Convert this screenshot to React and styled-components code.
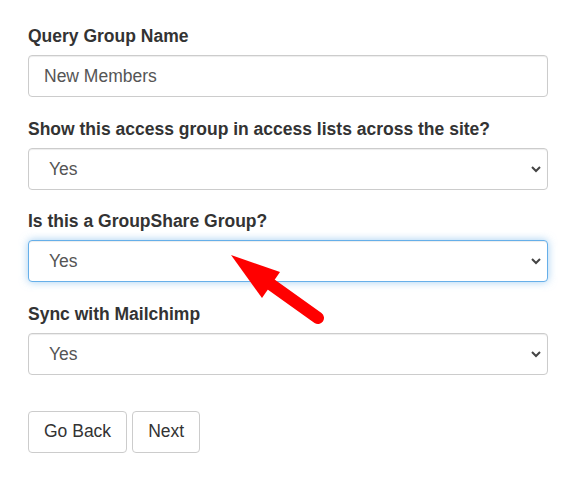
import React from 'react';
import styled, { createGlobalStyle } from 'styled-components';

const GlobalStyle = createGlobalStyle`
  * { box-sizing: border-box; }
  body {
    margin: 0;
    background: #fff;
    font-family: "Liberation Sans", Arial, sans-serif;
    color: #333;
  }
`;

const Page = styled.div`
  position: relative;
  width: 583px;
  height: 496px;
  padding: 25px 35px 0 28px;
`;

const FormGroup = styled.div`
  margin-bottom: 20.5px;
`;

const Label = styled.label`
  display: block;
  font-size: 17.5px;
  font-weight: bold;
  line-height: 22px;
  margin-bottom: 8px;
`;

const TextInput = styled.input`
  display: block;
  width: 520px;
  height: 42px;
  padding: 6px 15px;
  font-family: inherit;
  font-size: 17.5px;
  color: #555;
  background: #fff;
  border: 1px solid #ccc;
  border-radius: 4px;
  box-shadow: inset 0 1px 1px rgba(0, 0, 0, 0.075);
  outline: none;
`;

const SelectWrap = styled.div`
  position: relative;
  width: 520px;
`;

const Select = styled.select`
  display: block;
  width: 100%;
  height: 42px;
  padding: 6px 20px;
  font-family: inherit;
  font-size: 17.5px;
  color: #555;
  background: #fff;
  appearance: none;
  border: 1px solid ${(p) => (p.$focused ? '#66afe9' : '#ccc')};
  border-radius: 4px;
  box-shadow: ${(p) =>
    p.$focused
      ? 'inset 0 1px 1px rgba(0,0,0,.075), 0 0 8px rgba(102,175,233,.6)'
      : 'inset 0 1px 1px rgba(0,0,0,.075)'};
  outline: none;
`;

const Chevron = styled.svg`
  position: absolute;
  right: 6px;
  top: 16px;
  pointer-events: none;
`;

const Actions = styled.div`
  display: flex;
  gap: 5px;
  margin-top: 36px;
`;

const Button = styled.button`
  height: 42px;
  padding: 0 15px;
  font-family: inherit;
  font-size: 17.5px;
  color: #333;
  background: #fff;
  border: 1px solid #ccc;
  border-radius: 4px;
`;

const Arrow = styled.svg`
  position: absolute;
  left: 0;
  top: 0;
  pointer-events: none;
`;

const SelectField = ({ label, focused }) => (
  <FormGroup>
    <Label>{label}</Label>
    <SelectWrap>
      <Select $focused={focused} defaultValue="Yes">
        <option>Yes</option>
        <option>No</option>
      </Select>
      <Chevron width="12" height="10" viewBox="0 0 12 10">
        <path d="M2 3 L6 7 L10 3" fill="none" stroke="#444" strokeWidth="2" />
      </Chevron>
    </SelectWrap>
  </FormGroup>
);

export default function App() {
  return (
    <>
      <GlobalStyle />
      <Page>
        <FormGroup>
          <Label>Query Group Name</Label>
          <TextInput defaultValue="New Members" />
        </FormGroup>
        <SelectField label="Show this access group in access lists across the site?" />
        <SelectField label="Is this a GroupShare Group?" focused />
        <SelectField label="Sync with Mailchimp" />
        <Actions>
          <Button>Go Back</Button>
          <Button>Next</Button>
        </Actions>
        <Arrow width="583" height="496">
          <line x1="318" y1="318" x2="262" y2="278" stroke="#ff0000" strokeWidth="12" strokeLinecap="round" />
          <polygon points="231,255 280,272 262,298" fill="#ff0000" />
        </Arrow>
      </Page>
    </>
  );
}
